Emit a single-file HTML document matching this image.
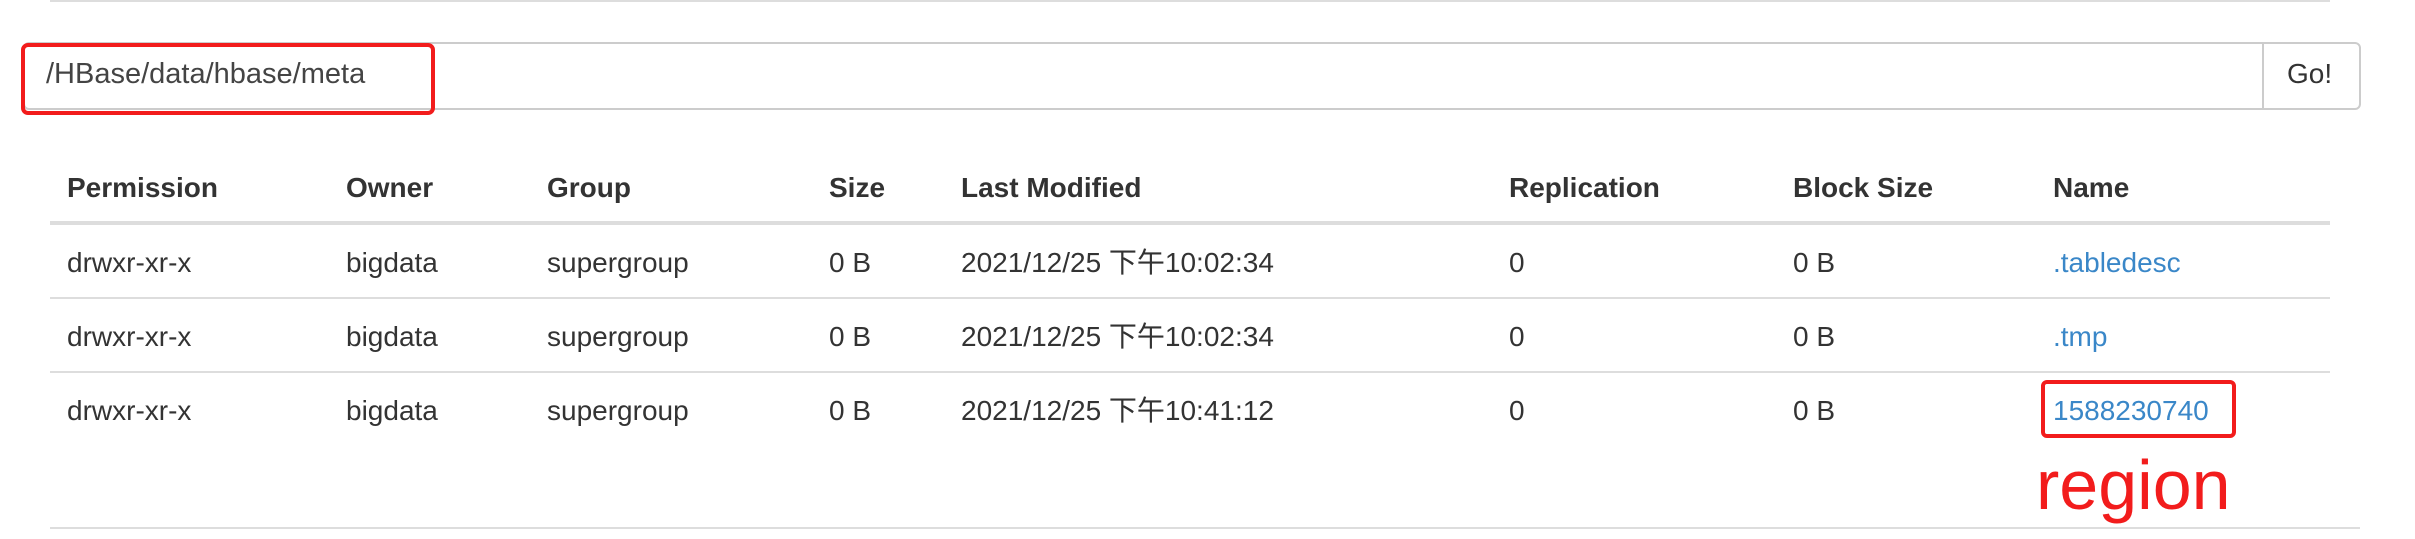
<!DOCTYPE html>
<html><head><meta charset="utf-8"><style>
html,body{margin:0;padding:0;background:#fff;width:2415px;height:539px;overflow:hidden;font-family:"Liberation Sans","Noto Sans CJK SC",sans-serif;color:#333;position:relative}
.a{position:absolute;white-space:nowrap}
.l{position:absolute;height:2px;background:#ddd}
.t{font-size:28px;line-height:28px}
.h{font-weight:bold}
.lk{color:#3a87c8}
</style></head><body>
<div class="l" style="left:50px;top:0;width:2280px;"></div>
<div class="a" style="left:23px;top:42px;width:2334px;height:64px;border:2px solid #ccc;border-radius:6px;"></div>
<div class="a" style="left:2262px;top:42px;width:2px;height:66px;background:#ccc"></div>
<div class="a t" style="left:2287px;top:60px;">Go!</div>
<div class="a" style="left:21px;top:43px;width:406px;height:64px;border:4px solid #f21c1c;border-radius:7px;"></div>
<div class="a t" style="left:46px;top:60px;font-size:29px;color:#444">/HBase/data/hbase/meta</div>

<div class="a t h" style="left:67px;top:174px">Permission</div>
<div class="a t h" style="left:346px;top:174px">Owner</div>
<div class="a t h" style="left:547px;top:174px">Group</div>
<div class="a t h" style="left:829px;top:174px">Size</div>
<div class="a t h" style="left:961px;top:174px">Last Modified</div>
<div class="a t h" style="left:1509px;top:174px">Replication</div>
<div class="a t h" style="left:1793px;top:174px">Block Size</div>
<div class="a t h" style="left:2053px;top:174px">Name</div>
<div class="l" style="left:50px;top:221px;width:2280px;height:4px"></div>

<div class="a t" style="left:67px;top:249px">drwxr-xr-x</div>
<div class="a t" style="left:346px;top:249px">bigdata</div>
<div class="a t" style="left:547px;top:249px">supergroup</div>
<div class="a t" style="left:829px;top:249px">0 B</div>
<div class="a t" style="left:961px;top:249px">2021/12/25 下午10:02:34</div>
<div class="a t" style="left:1509px;top:249px">0</div>
<div class="a t" style="left:1793px;top:249px">0 B</div>
<div class="a t lk" style="left:2053px;top:249px">.tabledesc</div>
<div class="l" style="left:50px;top:297px;width:2280px"></div>

<div class="a t" style="left:67px;top:323px">drwxr-xr-x</div>
<div class="a t" style="left:346px;top:323px">bigdata</div>
<div class="a t" style="left:547px;top:323px">supergroup</div>
<div class="a t" style="left:829px;top:323px">0 B</div>
<div class="a t" style="left:961px;top:323px">2021/12/25 下午10:02:34</div>
<div class="a t" style="left:1509px;top:323px">0</div>
<div class="a t" style="left:1793px;top:323px">0 B</div>
<div class="a t lk" style="left:2053px;top:323px">.tmp</div>
<div class="l" style="left:50px;top:371px;width:2280px"></div>

<div class="a t" style="left:67px;top:397px">drwxr-xr-x</div>
<div class="a t" style="left:346px;top:397px">bigdata</div>
<div class="a t" style="left:547px;top:397px">supergroup</div>
<div class="a t" style="left:829px;top:397px">0 B</div>
<div class="a t" style="left:961px;top:397px">2021/12/25 下午10:41:12</div>
<div class="a t" style="left:1509px;top:397px">0</div>
<div class="a t" style="left:1793px;top:397px">0 B</div>
<div class="a t lk" style="left:2053px;top:397px">1588230740</div>
<div class="a" style="left:2041px;top:380px;width:187px;height:50px;border:4px solid #f21c1c;border-radius:6px;"></div>
<div class="a" style="left:2036px;top:450px;font-size:70px;line-height:70px;color:#f21c1c">region</div>
<div class="l" style="left:50px;top:527px;width:2310px"></div>
</body></html>
